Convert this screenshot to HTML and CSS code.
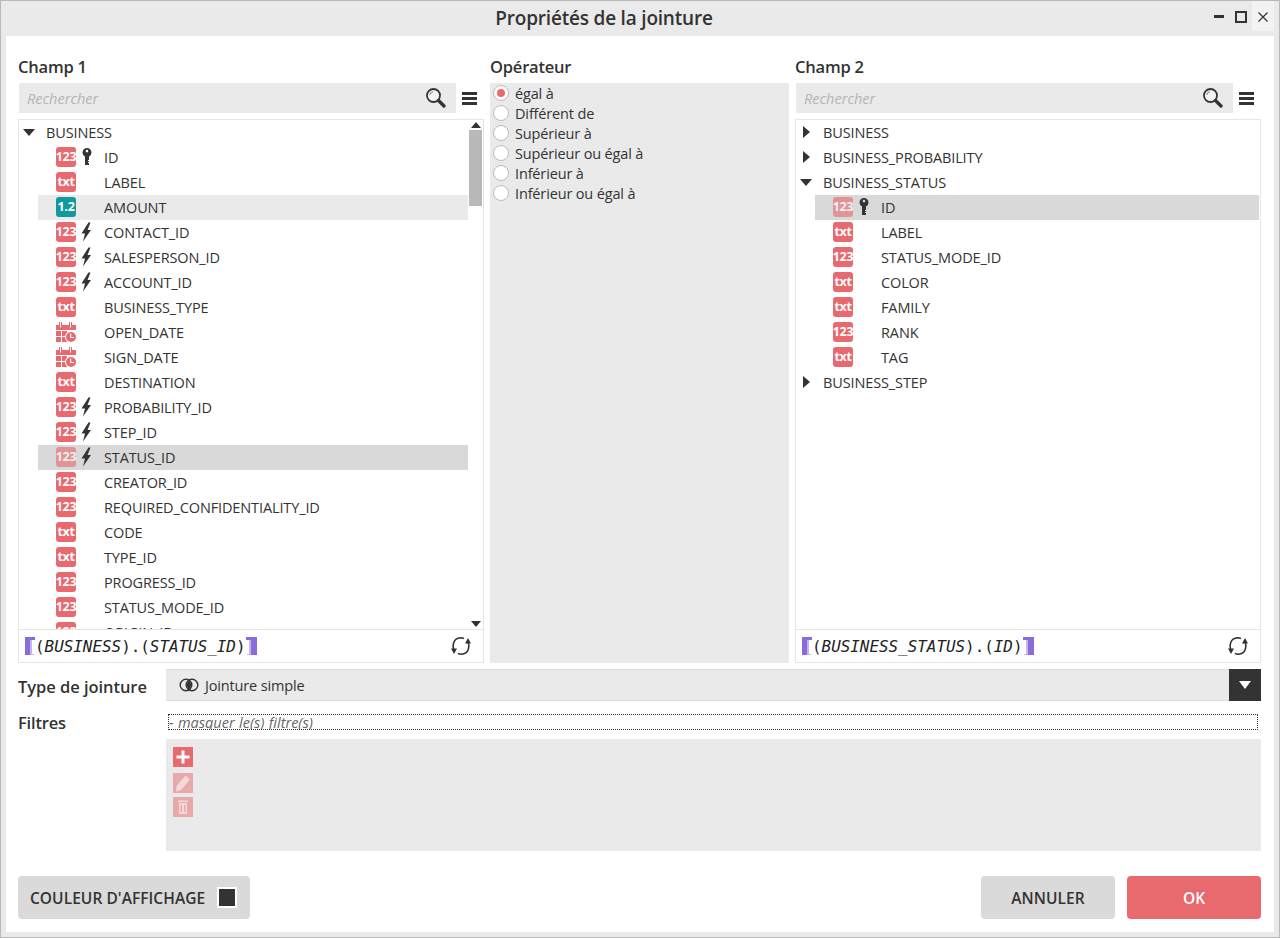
FILE: index.html
```html
<!DOCTYPE html>
<html lang="fr">
<head>
<meta charset="utf-8">
<title>Propriétés de la jointure</title>
<link rel="stylesheet" href="styles.css">
</head>
<body>
<svg class="defs" width="0" height="0" aria-hidden="true">
  <symbol id="i-key" viewBox="0 0 12 20"><path fill="#333" fill-rule="evenodd" d="M7 1a4.500 4.500 0 0 1 2 8.500V13H8v1h1v1H8v1h1v2H5V9.500A4.500 4.500 0 0 1 7 1zm0 1.800a1.300 1.300 0 1 0 0 2.600 1.300 1.300 0 0 0 0-2.600z"/></symbol>
  <symbol id="i-bolt" viewBox="0 0 12 20"><path fill="#333" d="M8.500.5 1.500 11.500H5L3 19.500 11 8H7.500L10.500.5z"/></symbol>
  <symbol id="i-cal" viewBox="0 0 20 20"><path fill="#e8696e" d="M0 3h20v5H0zM3 0h3v3H3zM13 0h3v3h-3z"/><path fill="#fff" d="M4 0h1v5.500H4zM14 0h1v5.500h-1z"/><path fill="#e8696e" d="M0 9h5v5H0zM6 9h5v5H6zM0 15h5v5H0zM6 15h5v5H6z"/><circle cx="15" cy="15" r="6" fill="#fff"/><circle cx="15" cy="15" r="5" fill="#e8696e"/><path fill="none" stroke="#fff" stroke-width="1.200" d="M14.600 11.500v4h3.400"/></symbol>
  <symbol id="i-search" viewBox="0 0 20 20"><circle cx="7.500" cy="7.500" r="6.500" fill="#fff" fill-opacity=".45" stroke="#333" stroke-width="1.800"/><path d="M3.800 7a3.800 3.800 0 0 1 3.200-3.200" fill="none" stroke="#999" stroke-width="1.200"/><path d="m12.500 12.500 5.500 5.500" stroke="#333" stroke-width="3.300" stroke-linecap="round"/></symbol>
  <symbol id="i-menu" viewBox="0 0 15 13"><path fill="#333" d="M0 0h15v3H0zM0 5h15v3H0zM0 10h15v3H0z"/></symbol>
  <symbol id="i-sync" viewBox="0 0 20 20"><path fill="none" stroke="#333" stroke-width="1.600" d="M2.700 14.500C1.300 9.500 1.800 2.500 9.500 1.800c1.500 0 2.700.2 3.500.8M17.200 5.500c1.400 5 1 12-6.700 12.700-1.500 0-2.700-.2-3.500-.8"/><path fill="#333" d="M0 12.500h6L3 18zM14 7.500h6L17 2z"/></symbol>
  <symbol id="i-lbr" viewBox="0 0 12 20"><path fill="#8a6bdc" d="M0 1h10v3H5.500v15H0z"/><path fill="#c4b6ef" d="M5.500 4H7v15H5.500zM7 18h2v1H7z"/></symbol>
  <symbol id="i-rbr" viewBox="0 0 12 20"><path fill="#8a6bdc" d="M0 1h11v18H4.500V4H0z"/><path fill="#c4b6ef" d="M3 4h1.500v15H3zM1 18h2v1H1z"/></symbol>
</svg>

<div class="window">
  <header class="titlebar">
    <h1 class="title">Propriétés de la jointure</h1>
    <div class="winctrl">
      <span class="wc"><span class="wc-min"></span></span>
      <span class="wc"><span class="wc-max"></span></span>
      <span class="wc wc-close"><svg class="wc-x" viewBox="0 0 10 10"><path d="m.5.5 9 9M9.500.5l-9 9" fill="none" stroke="#333" stroke-width="1.200"/></svg></span>
    </div>
  </header>

  <main class="content">
    <div class="columns">
      <section class="col">
        <h2 class="heading">Champ 1</h2>
        <div class="searchrow">
          <div class="search"><span class="placeholder">Rechercher</span><svg class="ic-search"><use href="#i-search"/></svg></div>
          <svg class="ic-menu"><use href="#i-menu"/></svg>
        </div>
        <div class="treebox">
          <div class="tree has-sb">
            <div class="tree-inner">
              <div class="node"><span class="tri tri-down"></span>BUSINESS</div>
              <div class="row"><span class="bdg">123</span><svg class="mark"><use href="#i-key"/></svg><span>ID</span></div>
              <div class="row"><span class="bdg">txt</span><span class="mark"></span><span>LABEL</span></div>
              <div class="row hover"><span class="bdg teal">1.2</span><span class="mark"></span><span>AMOUNT</span></div>
              <div class="row"><span class="bdg">123</span><svg class="mark"><use href="#i-bolt"/></svg><span>CONTACT_ID</span></div>
              <div class="row"><span class="bdg">123</span><svg class="mark"><use href="#i-bolt"/></svg><span>SALESPERSON_ID</span></div>
              <div class="row"><span class="bdg">123</span><svg class="mark"><use href="#i-bolt"/></svg><span>ACCOUNT_ID</span></div>
              <div class="row"><span class="bdg">txt</span><span class="mark"></span><span>BUSINESS_TYPE</span></div>
              <div class="row"><svg class="bdg-cal"><use href="#i-cal"/></svg><span class="mark"></span><span>OPEN_DATE</span></div>
              <div class="row"><svg class="bdg-cal"><use href="#i-cal"/></svg><span class="mark"></span><span>SIGN_DATE</span></div>
              <div class="row"><span class="bdg">txt</span><span class="mark"></span><span>DESTINATION</span></div>
              <div class="row"><span class="bdg">123</span><svg class="mark"><use href="#i-bolt"/></svg><span>PROBABILITY_ID</span></div>
              <div class="row"><span class="bdg">123</span><svg class="mark"><use href="#i-bolt"/></svg><span>STEP_ID</span></div>
              <div class="row selected"><span class="bdg">123</span><svg class="mark"><use href="#i-bolt"/></svg><span>STATUS_ID</span></div>
              <div class="row"><span class="bdg">123</span><span class="mark"></span><span>CREATOR_ID</span></div>
              <div class="row"><span class="bdg">123</span><span class="mark"></span><span>REQUIRED_CONFIDENTIALITY_ID</span></div>
              <div class="row"><span class="bdg">txt</span><span class="mark"></span><span>CODE</span></div>
              <div class="row"><span class="bdg">txt</span><span class="mark"></span><span>TYPE_ID</span></div>
              <div class="row"><span class="bdg">123</span><span class="mark"></span><span>PROGRESS_ID</span></div>
              <div class="row"><span class="bdg">123</span><span class="mark"></span><span>STATUS_MODE_ID</span></div>
              <div class="row"><span class="bdg">123</span><span class="mark"></span><span>ORIGIN_ID</span></div>
            </div>
            <div class="scrollbar">
              <span class="sb-up"></span>
              <span class="sb-track"><span class="sb-thumb"></span></span>
              <span class="sb-down"></span>
            </div>
          </div>
          <div class="expr">
            <svg class="br"><use href="#i-lbr"/></svg><span class="code">(<i>BUSINESS</i>).(<i>STATUS_ID</i>)</span><svg class="br"><use href="#i-rbr"/></svg>
            <svg class="ic-sync"><use href="#i-sync"/></svg>
          </div>
        </div>
      </section>

      <section class="col">
        <h2 class="heading">Opérateur</h2>
        <div class="oppanel">
          <div class="radio"><span class="dot on"></span>égal à</div>
          <div class="radio"><span class="dot"></span>Différent de</div>
          <div class="radio"><span class="dot"></span>Supérieur à</div>
          <div class="radio"><span class="dot"></span>Supérieur ou égal à</div>
          <div class="radio"><span class="dot"></span>Inférieur à</div>
          <div class="radio"><span class="dot"></span>Inférieur ou égal à</div>
        </div>
      </section>

      <section class="col">
        <h2 class="heading">Champ 2</h2>
        <div class="searchrow">
          <div class="search"><span class="placeholder">Rechercher</span><svg class="ic-search"><use href="#i-search"/></svg></div>
          <svg class="ic-menu"><use href="#i-menu"/></svg>
        </div>
        <div class="treebox">
          <div class="tree">
            <div class="tree-inner">
              <div class="node"><span class="tri tri-right"></span>BUSINESS</div>
              <div class="node"><span class="tri tri-right"></span>BUSINESS_PROBABILITY</div>
              <div class="node"><span class="tri tri-down"></span>BUSINESS_STATUS</div>
              <div class="row selected"><span class="bdg">123</span><svg class="mark"><use href="#i-key"/></svg><span>ID</span></div>
              <div class="row"><span class="bdg">txt</span><span class="mark"></span><span>LABEL</span></div>
              <div class="row"><span class="bdg">123</span><span class="mark"></span><span>STATUS_MODE_ID</span></div>
              <div class="row"><span class="bdg">txt</span><span class="mark"></span><span>COLOR</span></div>
              <div class="row"><span class="bdg">txt</span><span class="mark"></span><span>FAMILY</span></div>
              <div class="row"><span class="bdg">123</span><span class="mark"></span><span>RANK</span></div>
              <div class="row"><span class="bdg">txt</span><span class="mark"></span><span>TAG</span></div>
              <div class="node"><span class="tri tri-right"></span>BUSINESS_STEP</div>
            </div>
          </div>
          <div class="expr">
            <svg class="br"><use href="#i-lbr"/></svg><span class="code">(<i>BUSINESS_STATUS</i>).(<i>ID</i>)</span><svg class="br"><use href="#i-rbr"/></svg>
            <svg class="ic-sync"><use href="#i-sync"/></svg>
          </div>
        </div>
      </section>
    </div>

    <div class="formline">
      <label class="flabel flabel-t">Type de jointure</label>
      <div class="select">
        <svg class="ic-join" viewBox="0 0 20 14"><circle cx="7" cy="7" r="5.800" fill="none" stroke="#333" stroke-width="1.400"/><circle cx="13" cy="7" r="5.800" fill="none" stroke="#333" stroke-width="1.400"/><path fill="#333" d="M10 2.500a5.800 5.800 0 0 1 0 9 5.800 5.800 0 0 1 0-9z"/></svg>
        <span class="select-text">Jointure simple</span>
        <span class="select-btn"><span class="tri-white"></span></span>
      </div>
    </div>

    <div class="filters">
      <label class="flabel flabel-f">Filtres</label>
      <div class="filters-main">
        <div class="toggle"><span class="toggle-text">- masquer le(s) filtre(s)</span></div>
        <div class="filterpanel">
          <span class="tool"><svg viewBox="0 0 20 20"><path fill="#fff" d="M8.500 3.500h3v5h5v3h-5v5h-3v-5h-5v-3h5z"/></svg></span>
          <span class="tool off t-edit"><svg viewBox="0 0 20 20"><path fill="#fff" fill-opacity=".55" d="M12.500 2.500 17 6.500 8 17l-5 1.500.5-5.500z"/></svg></span>
          <span class="tool off"><svg viewBox="0 0 20 20"><path fill="#fff" fill-opacity=".55" d="M5 3.500h10v1.500H5zM6 6h8v11H6zm1.500 2v7H9V8zm3.500 0v7h1.500V8z" fill-rule="evenodd"/></svg></span>
        </div>
      </div>
    </div>

    <footer class="actions">
      <button class="btn btn-color">COULEUR D'AFFICHAGE<span class="swatch"></span></button>
      <span class="spacer"></span>
      <button class="btn btn-cancel">ANNULER</button>
      <button class="btn btn-ok">OK</button>
    </footer>
  </main>
</div>
</body>
</html>
```
FILE: styles.css
```css
* { box-sizing: border-box; }
html, body { margin: 0; padding: 0; height: 100%; }
body { font-family: "Open Sans", "Noto Sans", sans-serif; color: #333; background: #fff; overflow: hidden; }
.defs { display: block; height: 0; }

.window { width: 1280px; height: 938px; background: #eaeaea; border: 1px solid #b9b9b9; display: flex; flex-direction: column; padding: 0 5px 5px; }

.titlebar { height: 35px; flex: none; display: flex; align-items: center; justify-content: center; position: relative; padding-right: 72px; }
.title { margin: 0; font-size: 19px; font-weight: 600; letter-spacing: -.2px; color: #333; position: relative; top: -1px; }
.winctrl { position: absolute; right: 0; top: 0; display: flex; height: 30px; }
.wc { width: 22px; height: 30px; display: flex; align-items: center; justify-content: center; }
.wc-min { width: 10px; height: 3px; background: #333; display: block; margin-top: 0; }
.wc-max { width: 12px; height: 12px; border: 2px solid #333; display: block; margin-top: 1px; }
.wc-close { background: #f3f3f3; }
.wc-x { width: 10px; height: 10px; display: block; margin: 1px 0 0 -1px; }

.content { flex: 1; background: #fff; padding: 20px 13px 13px 12px; display: flex; flex-direction: column; min-height: 0; }
.columns { display: grid; grid-template-columns: 466px 299px 466px; column-gap: 6px; height: 607px; flex: none; }
.col { display: flex; flex-direction: column; min-height: 0; }
.heading { margin: 0; height: 27px; line-height: 21px; font-size: 16.500px; font-weight: 600; letter-spacing: -.2px; color: #333; }

.searchrow { display: flex; align-items: center; height: 30px; padding-left: 1px; flex: none; }
.search { width: 437px; height: 30px; background: #eaeaea; display: flex; align-items: center; justify-content: space-between; padding: 0 10px 0 8px; }
.placeholder { font-size: 14.500px; font-style: italic; color: #b4b4b4; }
.ic-search { width: 20px; height: 20px; }
.ic-menu { width: 15px; height: 13px; margin-left: 6px; }

.treebox { margin-top: 6px; flex: 1; min-height: 0; border: 1px solid #e6e6e6; display: flex; flex-direction: column; }
.tree { flex: 1; min-height: 0; position: relative; overflow: hidden; }
.tree-inner { display: flex; flex-direction: column; }

.node, .row { height: 25px; flex: none; display: flex; align-items: center; font-size: 14.500px; letter-spacing: -.12px; color: #333; white-space: nowrap; padding-bottom: 1px; }
.node { padding-left: 4px; }
.row { margin-left: 19px; padding-left: 18px; }
.tree .hover { background: #eaeaea; }
.tree .selected { background: #d9d9d9; margin-right: 1px; }
.has-sb .hover, .tree.has-sb .selected { margin-right: 15px; }
.tree .selected .bdg { opacity: .62; }

.tri { width: 12px; height: 8px; margin-right: 11px; display: block; flex: none; }
.tri-down { border-left: 6px solid transparent; border-right: 6px solid transparent; border-top: 7px solid #333; width: 0; height: 0; margin-right: 11px; }
.tri-right { border-top: 6px solid transparent; border-bottom: 6px solid transparent; border-left: 7px solid #333; width: 0; height: 0; margin: 0 13px 0 3px; }

.bdg { width: 20px; height: 20px; border-radius: 3px; background: #e8696e; color: #fff; font-size: 12.500px; font-weight: 700; letter-spacing: -.3px; display: flex; align-items: center; justify-content: center; flex: none; margin-top: -1px; }
.bdg.teal { background: #12999e; }
.bdg-cal { width: 20px; height: 20px; flex: none; margin-top: -1px; }
.mark { width: 12px; height: 20px; margin: -1px 12px 0 4px; flex: none; display: block; }

.scrollbar { position: absolute; right: 1px; top: 0; bottom: 0; width: 13px; display: flex; flex-direction: column; align-items: center; }
.sb-up, .sb-down { width: 0; height: 0; border-left: 5px solid transparent; border-right: 5px solid transparent; flex: none; }
.sb-up { border-bottom: 6px solid #333; margin: 2px 0 2px; }
.sb-down { border-top: 6px solid #333; margin: 2px 0 2px; }
.sb-track { flex: 1; width: 13px; display: block; }
.sb-thumb { display: block; width: 13px; height: 76px; background: #b9b9b9; }

.expr { height: 33px; flex: none; border-top: 1px solid #e6e6e6; display: flex; align-items: center; padding: 0 12px 0 6px; }
.br { width: 12px; height: 20px; flex: none; }
.code { font-family: "DejaVu Sans Mono", monospace; font-size: 15.900px; color: #222; white-space: pre; margin-left: -2px; margin-right: -2px; padding-right: 2px; }
.ic-sync { width: 20px; height: 20px; margin-left: auto; }

.oppanel { flex: 1; margin-top: 0; background: #eaeaea; padding: 0 3px; }
.radio { height: 20px; display: flex; align-items: center; font-size: 14.500px; letter-spacing: -.15px; color: #333; white-space: nowrap; }
.dot { width: 16px; height: 16px; border-radius: 50%; background: #fff; border: 1px solid #bcbcbc; margin-right: 6px; position: relative; flex: none; }
.dot.on::after { content: ""; position: absolute; left: 3px; top: 3px; width: 8px; height: 8px; border-radius: 50%; background: #e8696e; }

.formline { display: flex; align-items: center; margin-top: 6px; height: 32px; flex: none; }
.flabel { width: 148px; font-size: 16.500px; font-weight: 600; letter-spacing: -.05px; color: #333; flex: none; }
.flabel-t { padding-top: 2px; }
.select { flex: 1; height: 32px; background: #eaeaea; border-top: 1px solid #dcdcdc; border-bottom: 1px solid #dcdcdc; display: flex; align-items: center; padding-left: 13px; }
.ic-join { width: 20px; height: 14px; flex: none; }
.select-text { font-size: 14.500px; letter-spacing: -.15px; margin-left: 6px; }
.select-btn { margin-left: auto; width: 32px; height: 32px; background: #333; display: flex; align-items: center; justify-content: center; }
.tri-white { width: 0; height: 0; border-left: 6.500px solid transparent; border-right: 6.500px solid transparent; border-top: 8px solid #fff; }

.filters { display: flex; margin-top: 13px; flex: none; }
.flabel-f { line-height: 18px; letter-spacing: -.2px; }
.filters-main { flex: 1; }
.toggle { height: 16px; margin: 0 3px 0 2px; border: 1px dotted #333; font-size: 14.500px; line-height: 14px; overflow: hidden; }
.toggle-text { display: inline-block; font-style: italic; letter-spacing: 0; color: #666; border-bottom: 1px solid #555; height: 15px; line-height: 15px; margin-left: 0; word-spacing: .6px; }
.filterpanel { margin-top: 9px; height: 112px; background: #eaeaea; padding: 8px 7px; display: flex; flex-direction: column; align-items: flex-start; }
.tool { width: 20px; height: 20px; background: #e8696e; display: block; }
.tool svg { width: 20px; height: 20px; display: block; }
.tool.off { background: #e9a9ab; margin-top: 4px; }
.tool.t-edit { margin-top: 6px; }

.actions { margin-top: 25px; display: flex; align-items: center; height: 43px; flex: none; }
.spacer { flex: 1; }
.btn { height: 43px; border: 0; border-radius: 4px; font-family: inherit; font-size: 15.500px; font-weight: 600; letter-spacing: .05px; display: flex; align-items: center; justify-content: center; padding: 0; color: #333; }
.btn-color { width: 232px; background: #dadada; justify-content: flex-start; padding-left: 12px; }
.swatch { width: 20px; height: 21px; background: #333; border: 2px solid #fff; margin-left: 12px; display: block; }
.btn-cancel { width: 134px; background: #dadada; }
.btn-ok { width: 134px; background: #e8696e; color: #fff; margin-left: 12px; }
```
